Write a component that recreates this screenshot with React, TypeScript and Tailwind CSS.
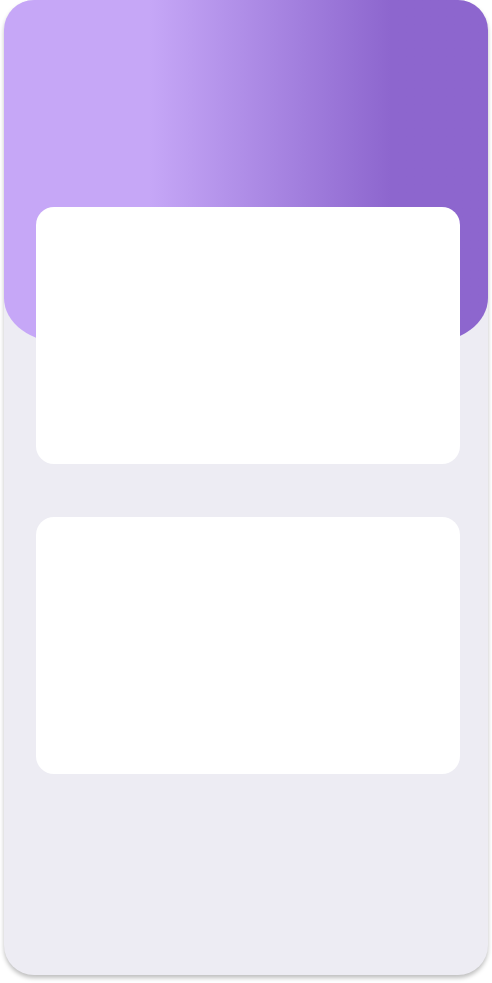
export default function App() {
  return (
    <div className="min-h-screen bg-white pl-[4px]">
      <div className="w-[484px] h-[975px] rounded-[30px] overflow-hidden bg-[#edecf3] shadow-[0_3px_4px_rgba(0,0,0,0.25)]">
        <div className="h-[343px] rounded-bl-[60px_45px] rounded-br-[60px_45px] bg-linear-to-r from-[#c6a7f7] from-30% to-[#8d66ce] to-80%" />
        <div className="-mt-[136px] pl-[32px] pr-[28px] flex flex-col gap-[53px]">
          <div className="h-[257px] rounded-[18px] bg-white" />
          <div className="h-[257px] rounded-[18px] bg-white" />
        </div>
      </div>
    </div>
  );
}
